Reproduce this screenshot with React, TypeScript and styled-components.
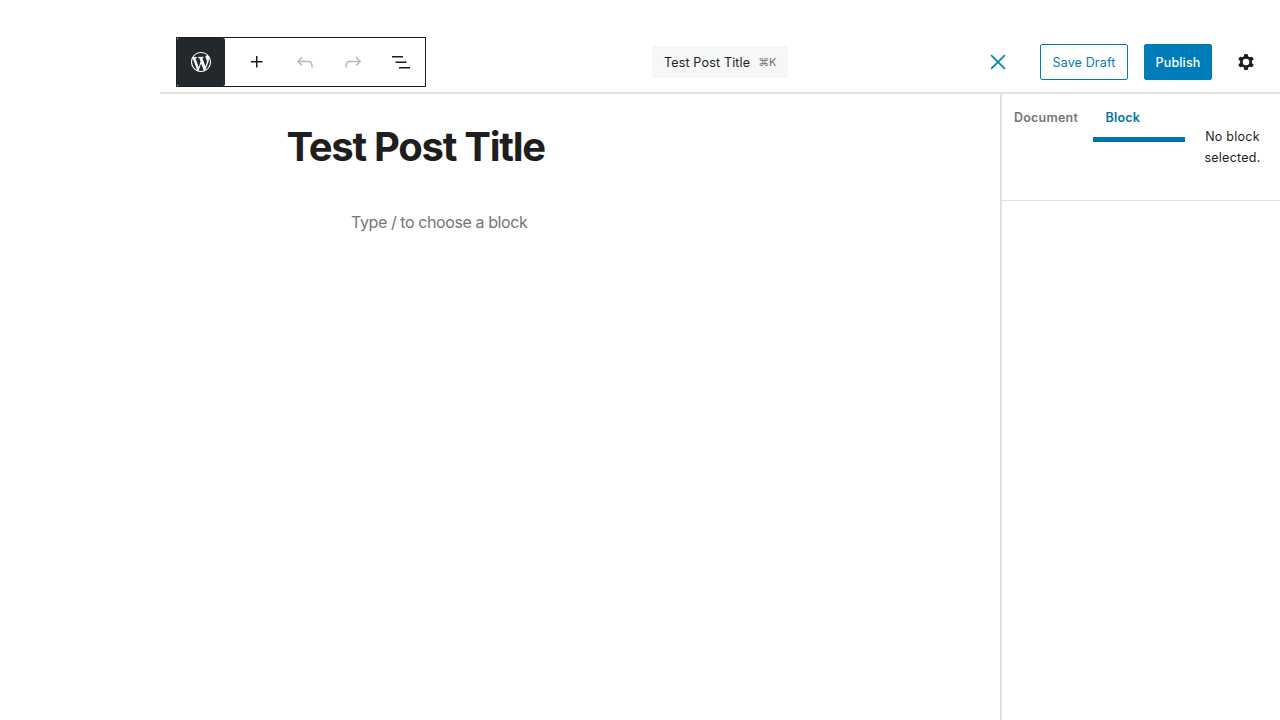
import React from "react";
import styled, { createGlobalStyle } from "styled-components";

const GlobalStyle = createGlobalStyle`
  *, *::before, *::after { box-sizing: border-box; }
  body {
    margin: 0;
    background: #fff;
    color: #1e1e1e;
    font-family: Inter, "Liberation Sans", sans-serif;
    font-size: 12.5px;
    letter-spacing: 0.16px;
    overflow: hidden;
  }
  button { font: inherit; letter-spacing: inherit; color: inherit; cursor: pointer; }
`;

const Editor = styled.div`
  display: flex;
  flex-direction: column;
  height: 100vh;
  padding: 32px 0 0 160px;
`;

const Header = styled.header`
  display: grid;
  grid-template-columns: 1fr auto 1fr;
  align-items: center;
  height: 62px;
  flex: none;
  padding: 0 16px;
  border-bottom: 2px solid #e0e0e0;
`;

const Toolbar = styled.div`
  display: flex;
  width: 250px;
  height: 50px;
  border: 1px solid #1e1e1e;
`;

const HomeLink = styled.button`
  display: grid;
  place-items: center;
  width: 48px;
  height: 48px;
  margin-right: 8px;
  padding: 0;
  border: 0;
  border-radius: 2px;
  background: #23282d;
  color: #fff;
`;

const ToolButton = styled.button<{ $muted?: boolean }>`
  display: grid;
  place-items: center;
  width: 48px;
  height: 48px;
  padding: 0;
  border: 0;
  background: none;
  color: ${(p) => (p.$muted ? "#b8b8b8" : "#1e1e1e")};
`;

const CommandBar = styled.button`
  display: flex;
  align-items: center;
  justify-content: center;
  gap: 8px;
  width: 136px;
  height: 32px;
  padding: 0;
  border: 0;
  border-radius: 2px;
  background: #f6f7f7;
  white-space: nowrap;
`;

const CommandTitle = styled.span`
  letter-spacing: 0.18px;
`;

const Shortcut = styled.span`
  color: #757575;
  font-size: 11px;
  letter-spacing: -0.3px;
`;

const Actions = styled.div`
  display: flex;
  align-items: center;
  justify-content: flex-end;
`;

const CloseButton = styled.button`
  display: grid;
  place-items: center;
  width: 36px;
  height: 36px;
  margin-right: 24px;
  padding: 0;
  border: 0;
  background: none;
  color: #007cba;
`;

const ActionButton = styled.button<{ $primary?: boolean }>`
  width: ${(p) => (p.$primary ? "68px" : "88px")};
  height: 36px;
  margin-right: 16px;
  padding: 1px 0 0;
  border: 1px solid #007cba;
  border-radius: 2px;
  background: ${(p) => (p.$primary ? "#007cba" : "#fff")};
  color: ${(p) => (p.$primary ? "#fff" : "#007cba")};
  font-weight: ${(p) => (p.$primary ? 500 : 400)};
  white-space: nowrap;
`;

const SettingsButton = styled(ToolButton)`
  width: 36px;
  height: 36px;
`;

const Body = styled.div`
  display: flex;
  flex: 1;
`;

const Canvas = styled.main`
  flex: 1;
  padding: 29px 0 0 126.5px;
`;

const PostTitle = styled.h1`
  margin: 0;
  font-size: 40px;
  font-weight: 700;
  line-height: 48px;
  letter-spacing: -1.28px;
`;

const Placeholder = styled.p`
  margin: 39px 0 0 64.5px;
  color: #757575;
  font-size: 16px;
  line-height: 24px;
  letter-spacing: -0.41px;
`;

const Sidebar = styled.aside`
  width: 280px;
  border-left: 2px solid #e0e0e0;
`;

const Panel = styled.div`
  display: flex;
  height: 107px;
  border-bottom: 1px solid #e0e0e0;
`;

const Tab = styled.button<{ $active?: boolean }>`
  width: ${(p) => (p.$active ? "92px" : "91px")};
  height: 48px;
  padding: 4px 0 0 ${(p) => (p.$active ? "12.5px" : "12px")};
  border: 0;
  border-bottom: 5px solid ${(p) => (p.$active ? "#0073aa" : "transparent")};
  background: none;
  color: ${(p) => (p.$active ? "#0073aa" : "#757575")};
  font-weight: 600;
  line-height: 39px;
  letter-spacing: 0.22px;
  text-align: left;
`;

const EmptyMessage = styled.p`
  flex: 1;
  margin: 0;
  padding-top: 32px;
  line-height: 21px;
  letter-spacing: 0.26px;
  text-align: center;
`;

const Line = styled.span`
  display: block;
`;

const iconPaths = {
  plus: "M11 12.5V17.5H12.5V12.5H17.5V11H12.5V6H11V11H6V12.5H11Z",
  undo: "M18.3 11.7c-.6-.6-1.4-.9-2.3-.9H6.7l2.9-3.3-1.1-1-4.5 5L8.5 16l1-1-2.7-2.7H16c.5 0 .9.2 1.3.5 1 1 1 3.4 1 4.5v.3h1.5v-.2c0-1.5 0-4.3-1.5-5.7z",
  redo: "M15.6 6.5l-1.1 1 2.9 3.3H8c-.9 0-1.7.3-2.3.9-1.4 1.5-1.4 4.2-1.4 5.6v.2h1.5v-.3c0-1.1 0-3.5 1-4.5.3-.3.7-.5 1.3-.5h9.2L14.5 15l1.1 1.1 4.6-4.6-4.6-5z",
  listView: "M3 6h11v1.5H3V6Zm3.5 5.5h11V13h-11v-1.5ZM21 17H10v1.5h11V17Z",
  wordpress: "M20 10c0-5.51-4.49-10-10-10C4.48 0 0 4.49 0 10c0 5.52 4.48 10 10 10 5.51 0 10-4.48 10-10zM7.78 15.37L4.37 6.22c.55-.02 1.17-.08 1.17-.08.5-.06.44-1.13-.06-1.11 0 0-1.45.11-2.37.11-.18 0-.37 0-.58-.01C4.12 2.69 6.87 1.11 10 1.11c2.33 0 4.45.87 6.05 2.34-.68-.11-1.65.39-1.65 1.58 0 .74.45 1.36.9 2.1.35.61.55 1.36.55 2.46 0 1.49-1.4 5-1.4 5l-3.03-8.37c.54-.02.82-.17.82-.17.5-.05.44-1.25-.06-1.22 0 0-1.44.12-2.38.12-.87 0-2.33-.12-2.33-.12-.5-.03-.56 1.2-.06 1.22l.92.08 1.26 3.41zM17.41 10c.24-.64.74-1.87.43-4.25.7 1.29 1.05 2.71 1.05 4.25 0 3.29-1.73 6.24-4.4 7.78.97-2.59 1.94-5.2 2.92-7.78zM6.1 18.09C3.12 16.65 1.11 13.53 1.11 10c0-1.3.23-2.48.72-3.59C3.25 10.3 4.67 14.2 6.1 18.09zm4.03-6.63l2.58 6.98c-.86.29-1.76.45-2.71.45-.79 0-1.57-.11-2.29-.33.81-2.38 1.62-4.74 2.42-7.1z",
};

function Icon({ name }: { name: keyof typeof iconPaths }) {
  return (
    <svg
      width="24"
      height="24"
      viewBox={name === "wordpress" ? "-2 -2 24 24" : "0 0 24 24"}
      fill="currentColor"
      aria-hidden="true"
    >
      <path d={iconPaths[name]} />
    </svg>
  );
}

function CogIcon() {
  return (
    <svg width="24" height="24" viewBox="0 0 24 24" fill="currentColor" aria-hidden="true">
      <circle cx="12" cy="12" r="4.6" fill="none" stroke="currentColor" strokeWidth="2.6" />
      {[0, 60, 120, 180, 240, 300].map((angle) => (
        <path
          key={angle}
          d="M9.5 7.9L10.2 4.6Q10.4 4 11 4H13Q13.6 4 13.8 4.6L14.5 7.9Z"
          transform={`rotate(${angle} 12 12)`}
        />
      ))}
    </svg>
  );
}

function CloseIcon() {
  return (
    <svg width="24" height="24" viewBox="0 0 24 24" fill="none" stroke="currentColor" strokeWidth="1.6" aria-hidden="true">
      <path d="M5.1 5.1l13.8 13.8M18.9 5.1L5.1 18.9" />
    </svg>
  );
}

export default function App() {
  return (
    <>
      <GlobalStyle />
      <Editor>
        <Header>
          <Toolbar>
            <HomeLink><Icon name="wordpress" /></HomeLink>
            <ToolButton><Icon name="plus" /></ToolButton>
            <ToolButton $muted><Icon name="undo" /></ToolButton>
            <ToolButton $muted><Icon name="redo" /></ToolButton>
            <ToolButton><Icon name="listView" /></ToolButton>
          </Toolbar>
          <CommandBar>
            <CommandTitle>Test Post Title</CommandTitle>
            <Shortcut>⌘K</Shortcut>
          </CommandBar>
          <Actions>
            <CloseButton><CloseIcon /></CloseButton>
            <ActionButton>Save Draft</ActionButton>
            <ActionButton $primary>Publish</ActionButton>
            <SettingsButton><CogIcon /></SettingsButton>
          </Actions>
        </Header>
        <Body>
          <Canvas>
            <PostTitle>Test Post Title</PostTitle>
            <Placeholder>Type / to choose a block</Placeholder>
          </Canvas>
          <Sidebar>
            <Panel>
              <Tab>Document</Tab>
              <Tab $active>Block</Tab>
              <EmptyMessage>
                <Line>No block</Line>
                <Line>selected.</Line>
              </EmptyMessage>
            </Panel>
          </Sidebar>
        </Body>
      </Editor>
    </>
  );
}
